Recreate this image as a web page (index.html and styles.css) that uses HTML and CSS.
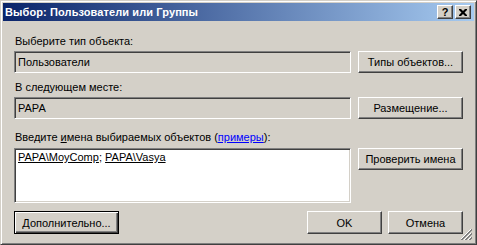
FILE: index.html
```html
<!DOCTYPE html>
<html lang="ru">
<head>
    <meta charset="UTF-8">
    <title>Выбор: Пользователи или Группы</title>
    <link rel="stylesheet" href="styles.css">
</head>
<body>
    <div class="window">
        <div class="titlebar">
            <span class="title">Выбор: Пользователи или Группы</span>
            <div class="caption-buttons">
                <div class="cap-btn help">?</div>
                <div class="cap-btn">
                    <svg width="8" height="7" viewBox="0 0 8 7">
                        <path d="M0 0h2l2 2 2-2h2v1l-2.5 2.5 2.5 2.5v1h-2l-2-2-2 2h-2v-1l2.5-2.5-2.5-2.5z" fill="#000"/>
                    </svg>
                </div>
            </div>
        </div>
        <div class="client">
            <div class="label first">Выберите тип объекта:</div>
            <div class="row">
                <div class="field">Пользователи</div>
                <div class="btn">Типы объектов...</div>
            </div>

            <div class="label">В следующем месте:</div>
            <div class="row">
                <div class="field">PAPA</div>
                <div class="btn">Размещение...</div>
            </div>

            <div class="label names">Введите <u>и</u>мена выбираемых объектов (<a href="#">примеры</a>):</div>
            <div class="row">
                <div class="field edit"><u>PAPA\MoyComp</u>; <u>PAPA\Vasya</u></div>
                <div class="btn">Проверить имена</div>
            </div>

            <div class="footer">
                <div class="btn default">Дополнительно...</div>
                <div class="footer-right">
                    <div class="btn small">OK</div>
                    <div class="btn small">Отмена</div>
                </div>
            </div>
        </div>
        <svg class="grip" width="12" height="12" viewBox="0 0 12 12">
            <path d="M11 0L0 11M11 4L4 11M11 8L8 11" stroke="#808080" stroke-width="1"/>
            <path d="M11 1L1 11M11 5L5 11M11 9L9 11" stroke="#808080" stroke-width="1"/>
            <path d="M10 0L-1 11M10 4L3 11M10 8L7 11" stroke="#fff" stroke-width="1"/>
        </svg>
    </div>
</body>
</html>
```
FILE: styles.css
```css
body {
    margin: 0;
    background-color: #d4d0c8;
    font-family: "Liberation Sans", Arial, sans-serif;
    font-size: 11px;
    color: #000;
}
.window {
    position: relative;
    width: 477px;
    height: 245px;
    box-sizing: border-box;
    background-color: #d4d0c8;
    border: 1px solid;
    border-color: #d4d0c8 #404040 #404040 #d4d0c8;
    box-shadow: inset 1px 1px #fff, inset -1px -1px #808080;
    padding: 2px;
}
.titlebar {
    height: 18px;
    background: linear-gradient(to right, #0a246a, #a6caf0);
    display: flex;
    align-items: center;
    justify-content: space-between;
    padding: 0 3px 0 2px;
}
.title {
    color: #fff;
    font-weight: bold;
    font-size: 11px;
    letter-spacing: 0.1px;
}
.caption-buttons {
    display: flex;
    gap: 2px;
}
.cap-btn {
    width: 16px;
    height: 14px;
    box-sizing: border-box;
    background-color: #d4d0c8;
    border: 1px solid;
    border-color: #fff #404040 #404040 #fff;
    box-shadow: inset -1px -1px #808080;
    display: flex;
    align-items: center;
    justify-content: center;
}
.cap-btn.help {
    font-weight: bold;
    font-size: 11px;
    line-height: 12px;
    padding-bottom: 1px;
}
.client {
    padding: 0 11px;
}
.label {
    line-height: 13px;
    height: 13px;
    margin: 8px 0 3px 1px;
    white-space: nowrap;
}
.label.first {
    margin-top: 14px;
}
.label.names {
    margin-top: 12px;
    margin-bottom: 4px;
}
.label a {
    color: #0000ff;
}
.row {
    display: flex;
    gap: 7px;
}
.field {
    flex: 1;
    height: 22px;
    box-sizing: border-box;
    border: 1px solid;
    border-color: #808080 #fff #fff #808080;
    box-shadow: inset 1px 1px #404040, inset -1px -1px #d4d0c8;
    padding: 3px 3px 0 3px;
    line-height: 14px;
    white-space: nowrap;
}
.field.edit {
    height: 55px;
    background-color: #fff;
    padding: 2px 3px;
    line-height: 13px;
}
.btn {
    width: 105px;
    height: 22px;
    box-sizing: border-box;
    background-color: #d4d0c8;
    border: 1px solid;
    border-color: #fff #404040 #404040 #fff;
    box-shadow: inset -1px -1px #808080;
    display: flex;
    align-items: center;
    justify-content: center;
    white-space: nowrap;
}
.btn.default {
    height: 23px;
    border-color: #000;
    box-shadow: inset 1px 1px #fff, inset -1px -1px #404040, inset -2px -2px #808080;
}
.btn.small {
    width: 75px;
    height: 23px;
}
.footer {
    display: flex;
    justify-content: space-between;
    margin-top: 8px;
}
.footer-right {
    display: flex;
    gap: 6px;
}
.grip {
    position: absolute;
    right: 3px;
    bottom: 3px;
}
```
